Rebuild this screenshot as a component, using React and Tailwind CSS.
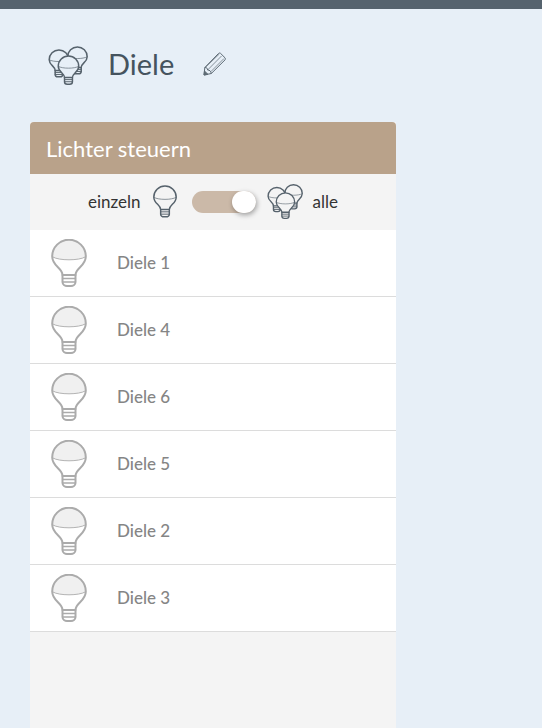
import React from "react";

const lights = ["Diele 1", "Diele 4", "Diele 6", "Diele 5", "Diele 2", "Diele 3"];

// single bulb, drawn on a 36x48 grid
const BulbShape = ({ stroke, strokeWidth = 2, fill = "none" }) => (
  <g fill="none" stroke={stroke} strokeWidth={strokeWidth} strokeLinecap="round" strokeLinejoin="round">
    <path
      d="M1.5 18A16.6 16.6 0 1 1 34.5 18C29 21.8 7 21.8 1.5 18Z"
      fill={fill}
      stroke="none"
    />
    <path d="M11.5 36C11.5 29 1.2 27 1.2 17.5A16.8 16.8 0 0 1 34.8 17.5C34.8 27 24.5 29 24.5 36Z" />
    <path d="M1.8 18C8 21.8 28 21.8 34.2 18" strokeWidth={strokeWidth * 0.45} />
    <path d="M11.5 36V43C11.5 45.5 14 47 16 47H20C22 47 24.5 45.5 24.5 43V36" />
    <path d="M11.5 39.5H24.5M11.5 43H24.5" strokeWidth={strokeWidth * 0.65} />
  </g>
);

const Bulb = ({ className, stroke, fill, strokeWidth }) => (
  <svg viewBox="0 0 36 48" className={className}>
    <BulbShape stroke={stroke} fill={fill} strokeWidth={strokeWidth} />
  </svg>
);

const BulbGroup = ({ className, bg }) => (
  <svg viewBox="0 0 40 39" className={className}>
    <g transform="translate(19 0.5) scale(0.58)">
      <BulbShape stroke="#56626c" strokeWidth={2.6} />
    </g>
    <g transform="translate(0.5 3.5) scale(0.58)">
      <BulbShape stroke="#56626c" strokeWidth={2.6} />
    </g>
    <g transform="translate(9.5 9.5) scale(0.61)">
      <path d="M11.5 36C11.5 29 1.2 27 1.2 17.5A16.8 16.8 0 0 1 34.8 17.5C34.8 27 24.5 29 24.5 36V43C24.5 45.5 22 47 20 47H16C14 47 11.5 45.5 11.5 43Z" fill={bg} />
      <BulbShape stroke="#56626c" strokeWidth={2.4} />
    </g>
  </svg>
);

const App = () => {
  return (
    <div className="flex h-screen flex-col overflow-hidden bg-[#e7eff7] font-['Lato','Noto_Sans',sans-serif]">
      <div className="h-[9px] shrink-0 bg-[#56636e]" />

      <div className="flex h-[113px] shrink-0 items-center pb-[3px] pl-[48px]">
        <BulbGroup className="mt-[2px] h-[39px] w-[40px]" bg="#e7eff7" />
        <h1 className="ml-[20px] text-[29px] font-normal text-[#45535e]">Diele</h1>
        <svg viewBox="0 0 24 24" className="ml-[28px] h-[24px] w-[24px]" fill="none" stroke="#5d6a74" strokeWidth="1" strokeLinejoin="round">
          <path d="M2 23L2.8 15.5L16.5 1.5C17.2 0.8 18 0.8 18.7 1.5L23 5.8C23.6 6.5 23.6 7.2 23 7.9L9.3 21.5Z" />
          <path d="M2.8 15.5C5 15.5 5.5 16.5 5.6 18C7.5 18 9 19 9.3 21.5" />
          <path d="M5.6 18L19.5 4M3.8 15L17.3 2M9 19.5L22 6.5" strokeWidth="0.7" />
          <path d="M2 23L2.5 19L6 22.4Z" fill="#5d6a74" />
        </svg>
      </div>

      <div className="ml-[30px] flex w-[366px] flex-1 flex-col bg-[#f4f4f4]">
        <div className="flex h-[52px] items-center rounded-t-[4px] bg-[#b9a28a] pl-4 text-[22px] text-white">
          Lichter steuern
        </div>

        <div className="flex h-[56px] items-center pb-[1px] pl-[58px] text-[17px] text-[#333]">
          <span>einzeln</span>
          <Bulb className="ml-[12px] h-[33px] w-[24px]" stroke="#56626c" strokeWidth={2.2} />
          <div className="relative ml-[15px] h-[22px] w-[64px] rounded-full bg-[#cbb9a8]">
            <div className="absolute right-0 top-0 h-[22px] w-[24px] rounded-full bg-white shadow-[1px_2px_5px_rgba(0,0,0,0.35)]" />
          </div>
          <BulbGroup className="ml-[11px] h-[37px] w-[36px]" bg="#f4f4f4" />
          <span className="ml-[10px]">alle</span>
        </div>

        <ul>
          {lights.map((name) => (
            <li key={name} className="flex h-[67px] items-center border-b border-[#dcdcdc] bg-white pl-[21px]">
              <Bulb className="h-[48px] w-[36px]" stroke="#ababab" fill="#f0f0f0" strokeWidth={2} />
              <span className="ml-[30px] pb-[1px] text-[17px] font-medium text-[#858585]">{name}</span>
            </li>
          ))}
        </ul>
      </div>
    </div>
  );
};

export default App;
